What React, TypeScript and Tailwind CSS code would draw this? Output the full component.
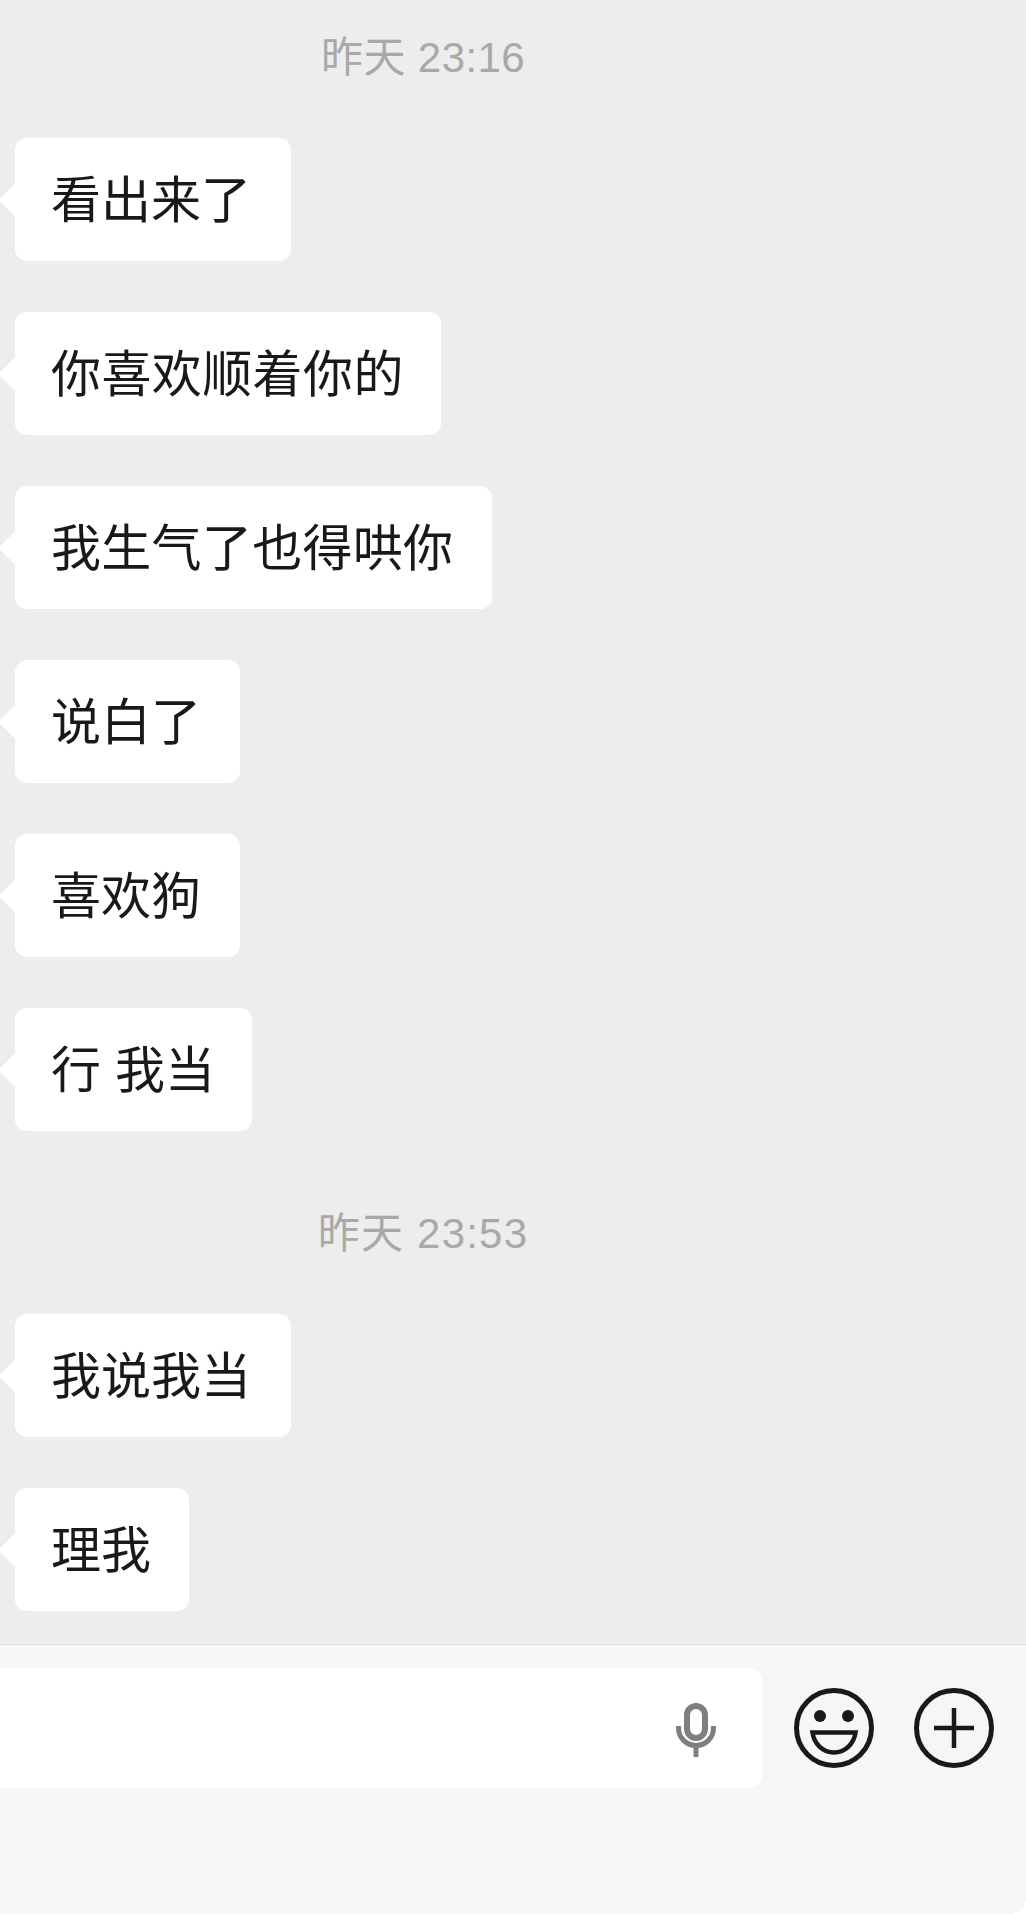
const cjk = "font-['Liberation_Sans','Noto_Sans_CJK_SC',sans-serif]";

function Bubble({ text, width, tracking }: { text: string; width: string; tracking: string }) {
  return (
    <div className={`relative h-[123px] rounded-[12px] bg-white pl-[36px] text-[50px] leading-[127px] whitespace-pre text-[#191919] ${width} ${tracking}`}>
      <span className="absolute top-1/2 -left-[12px] h-[24px] w-[24px] -translate-y-1/2 rotate-45 rounded-[3px] bg-white" />
      <span className="relative">{text}</span>
    </div>
  );
}

function TimeLabel({ text, tracking }: { text: string; tracking: string }) {
  return (
    <div className={`h-[60px] w-[846px] text-center text-[42px] leading-[62px] text-[#a9a9a9] ${tracking}`}>
      {text}
    </div>
  );
}

function MicIcon() {
  return (
    <svg width="40" height="54" viewBox="0 0 40 54" fill="none" stroke="#7f7f7f">
      <rect x="11" y="3" width="18" height="32" rx="9" strokeWidth="6" />
      <path d="M2.500 23v2a17.500 17.500 0 0 0 35 0v-2" strokeWidth="5" />
      <path d="M20 44v10" strokeWidth="5" />
    </svg>
  );
}

function SmileIcon() {
  return (
    <svg width="80" height="80" viewBox="0 0 80 80" fill="none" stroke="#191919" strokeWidth="5">
      <circle cx="40" cy="40" r="37.500" />
      <circle cx="26" cy="28" r="6" fill="#191919" stroke="none" />
      <circle cx="54" cy="28" r="6" fill="#191919" stroke="none" />
      <path d="M18.500 44.500h43c-1.500 11-10 20-21.500 20s-20-9-21.500-20Z" strokeWidth="4.500" />
    </svg>
  );
}

function PlusIcon() {
  return (
    <svg width="80" height="80" viewBox="0 0 80 80" fill="none" stroke="#191919">
      <circle cx="40" cy="40" r="37.500" strokeWidth="5" />
      <path d="M20 40h40M40 20v40" strokeWidth="4.500" />
    </svg>
  );
}

export default function App() {
  return (
    <div className={`flex h-[1914px] w-[1026px] flex-col overflow-hidden bg-white ${cjk}`}>
      <div className="flex flex-1 flex-col items-start bg-[#ededed] pt-[27px] pl-[15px]">
        <div className="-ml-[15px]">
          <TimeLabel text="昨天 23:16" tracking="tracking-[0.4px]" />
        </div>
        <div className="mt-[51px] flex flex-col gap-[51px]">
          <Bubble text="看出来了" width="w-[276px]" tracking="tracking-normal" />
          <Bubble text="你喜欢顺着你的" width="w-[426px]" tracking="tracking-[0.4px]" />
          <Bubble text="我生气了也得哄你" width="w-[477px]" tracking="tracking-[0.3px]" />
          <Bubble text="说白了" width="w-[225px]" tracking="tracking-normal" />
          <Bubble text="喜欢狗" width="w-[225px]" tracking="tracking-normal" />
          <Bubble text="行 我当" width="w-[237px]" tracking="tracking-normal" />
        </div>
        <div className="mt-[72px] -ml-[15px]">
          <TimeLabel text="昨天 23:53" tracking="tracking-[1.2px]" />
        </div>
        <div className="mt-[51px] flex flex-col gap-[51px]">
          <Bubble text="我说我当" width="w-[276px]" tracking="tracking-normal" />
          <Bubble text="理我" width="w-[174px]" tracking="tracking-normal" />
        </div>
      </div>
      <div className="flex h-[270px] items-start rounded-br-[16px] border-t border-[#dcdcdc] bg-[#f6f6f6] pt-[23px]">
        <div className="flex h-[120px] w-[762px] items-center justify-end rounded-r-[12px] bg-white pt-[4px] pr-[46px]">
          <MicIcon />
        </div>
        <div className="mt-[20px] ml-[32px] flex gap-[40px]">
          <SmileIcon />
          <PlusIcon />
        </div>
      </div>
    </div>
  );
}
